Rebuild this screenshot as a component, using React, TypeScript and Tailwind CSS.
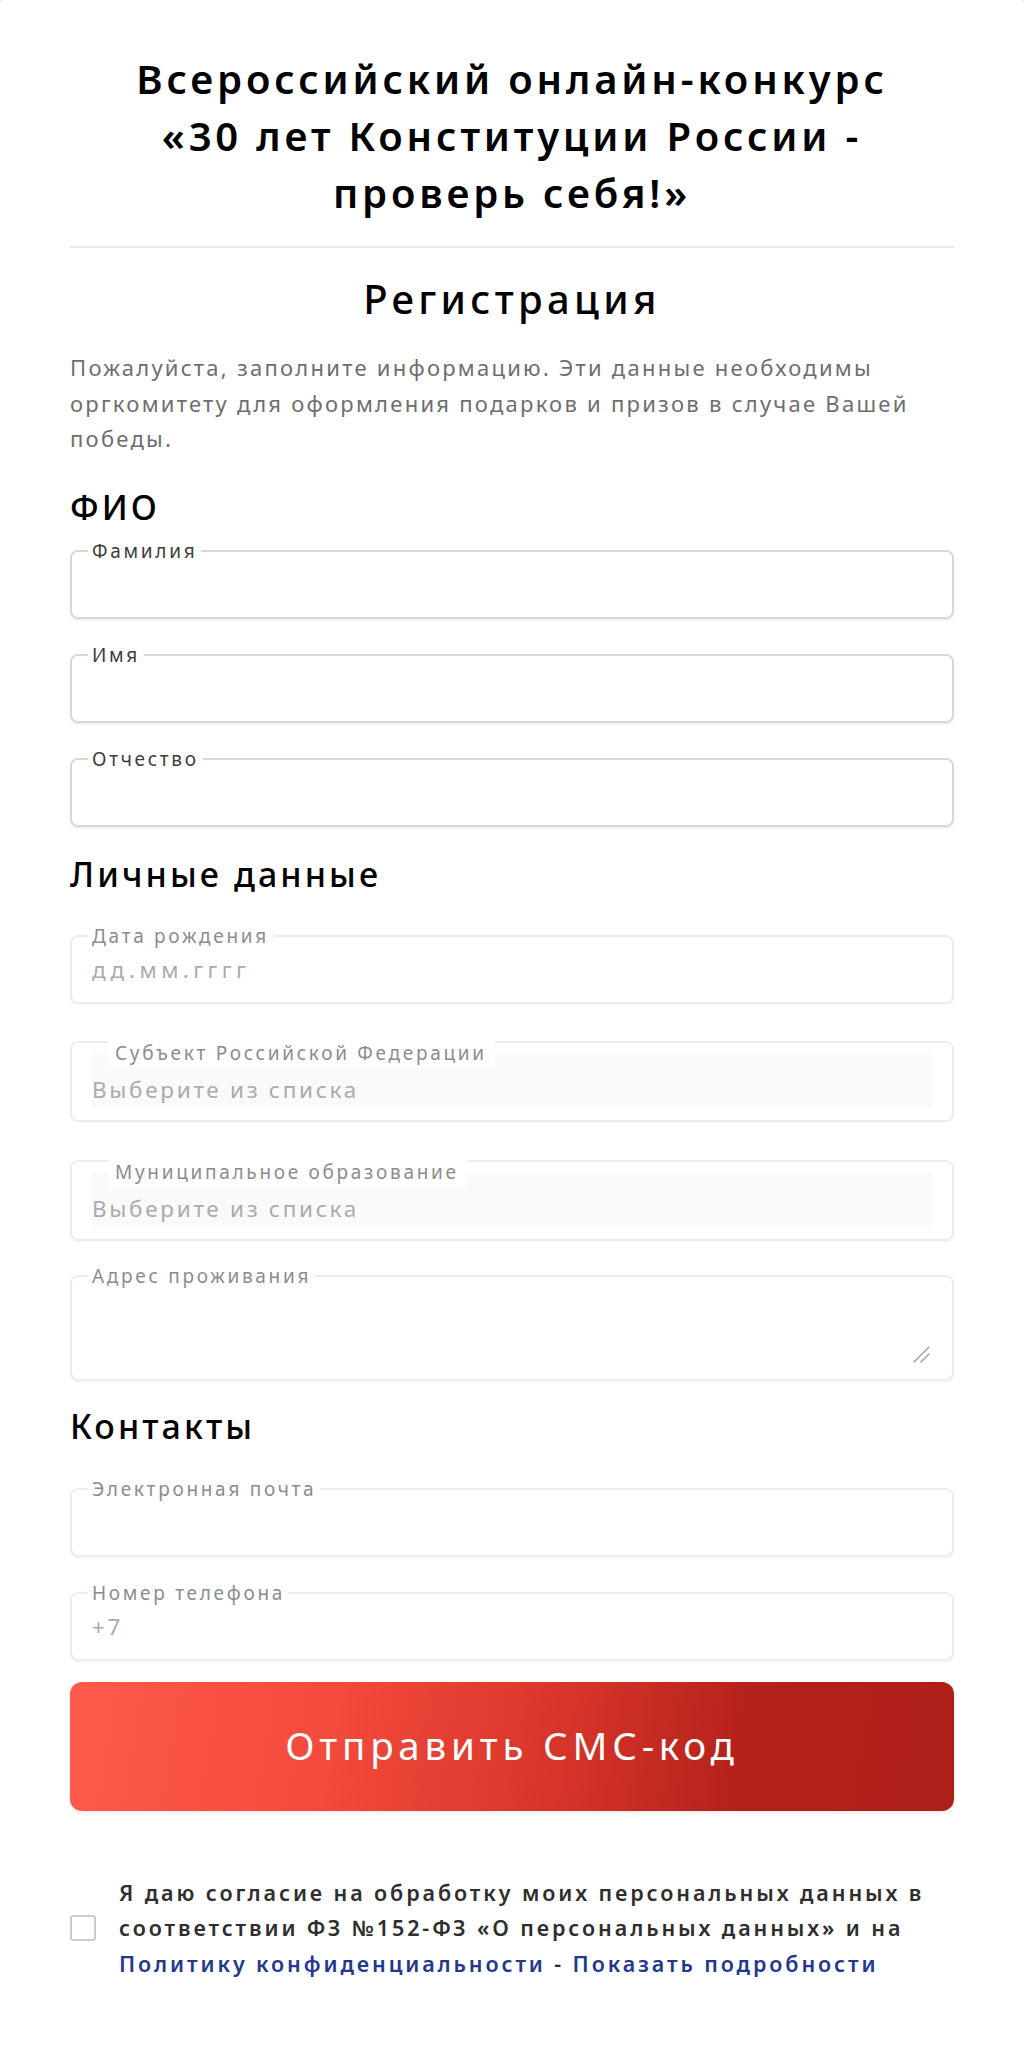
import React from "react";

const font = { fontFamily: '"Noto Sans", "Open Sans", sans-serif' };

type FieldProps = {
  label: string;
  placeholder?: string;
  strong?: boolean;
  wide?: boolean;
};

const Field = ({ label, placeholder, strong, wide }: FieldProps) => {
  return (
    <fieldset
      className={`min-w-0 rounded-[8px] border-2 px-[20px] pb-[10px] pt-0 ${
        strong
          ? "border-[#d5d8dd] shadow-[0_2px_2px_rgba(0,0,0,0.06)]"
          : "border-[#ebecef] shadow-[0_1px_2px_rgba(0,0,0,0.04)]"
      }`}
    >
      <legend
        className={`ml-[-4px] px-[4px] text-[19px] leading-[24px] tracking-[2.7px] ${
          strong ? "text-[#3c3c3c]" : "text-[#8c8c8c]"
        }`}
      >
        {label}
      </legend>
      <div
        className={`h-[44px] text-[22.5px] leading-[44px] text-[#ababab] ${
          wide ? "tracking-[4.4px]" : "tracking-[2.7px]"
        }`}
      >
        {placeholder}
      </div>
    </fieldset>
  );
};

const SelectField = ({ label }: { label: string }) => {
  return (
    <div className="relative rounded-[8px] border-2 border-[#ebecef] px-[20px] pt-[11px] pb-[13px] shadow-[0_1px_2px_rgba(0,0,0,0.04)]">
      <div className="absolute left-[36px] top-[-2px] bg-white pl-[7px] pr-[8px] pb-[2px] text-[19px] leading-[24px] tracking-[2.7px] text-[#8c8c8c]">
        {label}
      </div>
      <div className="h-[53px] bg-[#fafafa] pt-[22px] text-[22.5px] leading-[28px] tracking-[2.7px] text-[#ababab]">
        Выберите из списка
      </div>
    </div>
  );
};

export default function App() {
  return (
    <div className="min-h-[2066px] bg-[#dfe6f5]" style={font}>
      <div className="min-h-[2066px] rounded-t-[3px] bg-white px-[70px] pt-[50px] pb-[60px]">
        <h1 className="whitespace-nowrap text-center text-[40px] font-semibold leading-[57px] tracking-[3.85px] text-black">
          Всероссийский онлайн-конкурс
          <br />
          «30 лет Конституции России -
          <br />
          проверь себя!»
        </h1>
        <div className="mt-[25px] h-[2px] bg-[#e6e8ec]" />

        <h2 className="mt-[27px] text-center text-[40px] font-medium leading-[48px] tracking-[4.3px] text-black">
          Регистрация
        </h2>
        <p className="mt-[27px] whitespace-nowrap text-[22px] leading-[35.5px] tracking-[2.25px] text-[#6e6e6e]">
          Пожалуйста, заполните информацию. Эти данные необходимы
          <br />
          оргкомитету для оформления подарков и призов в случае Вашей
          <br />
          победы.
        </p>

        <h3 className="mt-[30px] text-[34px] font-medium leading-[40px] tracking-[3.1px] text-black">
          ФИО
        </h3>
        <div className="mt-[12px] flex flex-col gap-[24px]">
          <Field label="Фамилия" strong />
          <Field label="Имя" strong />
          <Field label="Отчество" strong />
        </div>

        <h3 className="mt-[27px] text-[34px] font-medium leading-[40px] tracking-[3.1px] text-black">
          Личные данные
        </h3>
        <div className="mt-[30px]">
          <Field label="Дата рождения" placeholder="дд.мм.гггг" wide />
        </div>
        <div className="mt-[37px] flex flex-col gap-[38px]">
          <SelectField label="Субъект Российской Федерации" />
          <SelectField label="Муниципальное образование" />
        </div>
        <fieldset className="relative mt-[23px] min-w-0 rounded-[8px] border-2 border-[#ebecef] px-[20px] pt-0 pb-[6px] shadow-[0_1px_2px_rgba(0,0,0,0.04)]">
          <legend className="ml-[-4px] px-[4px] text-[19px] leading-[24px] tracking-[2.7px] text-[#8c8c8c]">
            Адрес проживания
          </legend>
          <div className="h-[85px]" />
          <svg
            className="absolute right-[22px] bottom-[16px]"
            width="18"
            height="18"
            viewBox="0 0 18 18"
          >
            <path
              d="M2 17 L17 2 M9 17 L17 9"
              stroke="#9c9c9c"
              strokeWidth="1.4"
              strokeLinecap="round"
            />
          </svg>
        </fieldset>

        <h3 className="mt-[25px] text-[34px] font-medium leading-[40px] tracking-[3.1px] text-black">
          Контакты
        </h3>
        <div className="mt-[31px] flex flex-col gap-[24px]">
          <Field label="Электронная почта" />
          <Field label="Номер телефона" placeholder="+7" />
        </div>

        <button className="mt-[21px] flex h-[129px] w-full items-center justify-center rounded-[12px] bg-[linear-gradient(100deg,#ff5a4b_0%,#f24a3c_30%,#d8352a_55%,#b5221b_75%,#ae1f19_100%)] text-[38.5px] tracking-[4.8px] text-white shadow-[0_2px_4px_rgba(0,0,0,0.08)]">
          Отправить СМС-код
        </button>

        <div className="mt-[64px] flex items-center gap-[23px]">
          <div className="h-[26px] w-[26px] shrink-0 rounded-[3px] border-2 border-[#c9ccd3] bg-white" />
          <p className="whitespace-nowrap text-[21.5px] font-semibold leading-[35.5px] tracking-[2.9px] text-[#2e2e2e]">
            Я даю согласие на обработку моих персональных данных в
            <br />
            соответствии ФЗ №152-ФЗ «О персональных данных» и на
            <br />
            <a className="text-[#23388f]" href="#">
              Политику конфиденциальности
            </a>{" "}
            -{" "}
            <a className="text-[#23388f]" href="#">
              Показать подробности
            </a>
          </p>
        </div>
      </div>
    </div>
  );
}
